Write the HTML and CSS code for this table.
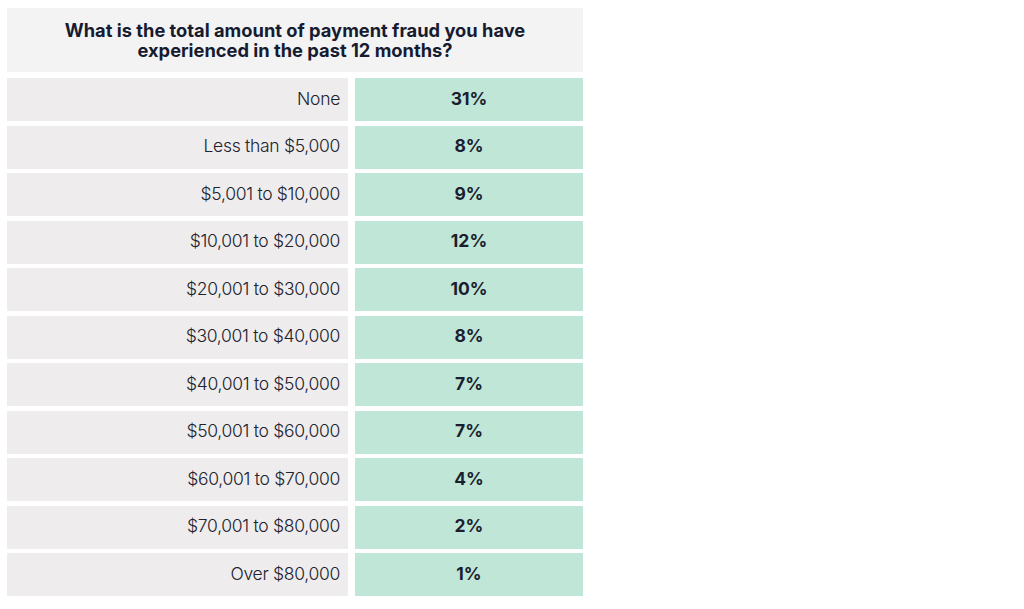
FILE: index.html
```html
<!DOCTYPE html>
<html>
<head>
<meta charset="utf-8">
<link rel="stylesheet" href="styles.css">
</head>
<body>
<div class="table">
  <div class="head">What is the total amount of payment fraud you have<br>experienced in the past 12 months?</div>
  <div class="row"><div class="label">None</div><div class="val">31%</div></div>
  <div class="row"><div class="label">Less than $5,000</div><div class="val">8%</div></div>
  <div class="row"><div class="label">$5,001 to $10,000</div><div class="val">9%</div></div>
  <div class="row"><div class="label">$10,001 to $20,000</div><div class="val">12%</div></div>
  <div class="row"><div class="label">$20,001 to $30,000</div><div class="val">10%</div></div>
  <div class="row"><div class="label">$30,001 to $40,000</div><div class="val">8%</div></div>
  <div class="row"><div class="label">$40,001 to $50,000</div><div class="val">7%</div></div>
  <div class="row"><div class="label">$50,001 to $60,000</div><div class="val">7%</div></div>
  <div class="row"><div class="label">$60,001 to $70,000</div><div class="val">4%</div></div>
  <div class="row"><div class="label">$70,001 to $80,000</div><div class="val">2%</div></div>
  <div class="row"><div class="label">Over $80,000</div><div class="val">1%</div></div>
</div>
</body>
</html>
```
FILE: styles.css
```css
html, body { margin: 0; padding: 0; background: #fff; }
body { font-family: Inter, "Liberation Sans", sans-serif; color: #1b1e2e; }
.table {
  margin: 8px 0 0 7px;
  width: 576px;
  display: flex;
  flex-direction: column;
  gap: 4.5px;
}
.head {
  background: #f3f3f3;
  height: 64px;
  box-sizing: border-box;
  padding-top: 12px;
  text-align: center;
  font-weight: 700;
  font-size: 18.3px;
  line-height: 20px;
  color: #171b30;
  margin-bottom: 1.5px;
}
.row { display: flex; gap: 7px; height: 43px; }
.label {
  width: 341px;
  background: #eeeced;
  display: flex;
  align-items: center;
  justify-content: flex-end;
  padding: 0 8px 3px 0;
  box-sizing: border-box;
  font-size: 17.5px;
  font-weight: 300;
  letter-spacing: -0.3px;
  color: #20222e;
}
.val {
  flex: 1;
  background: #c0e6d8;
  display: flex;
  align-items: center;
  justify-content: center;
  padding-bottom: 3px;
  box-sizing: border-box;
  font-size: 17.5px;
  font-weight: 700;
}
```
